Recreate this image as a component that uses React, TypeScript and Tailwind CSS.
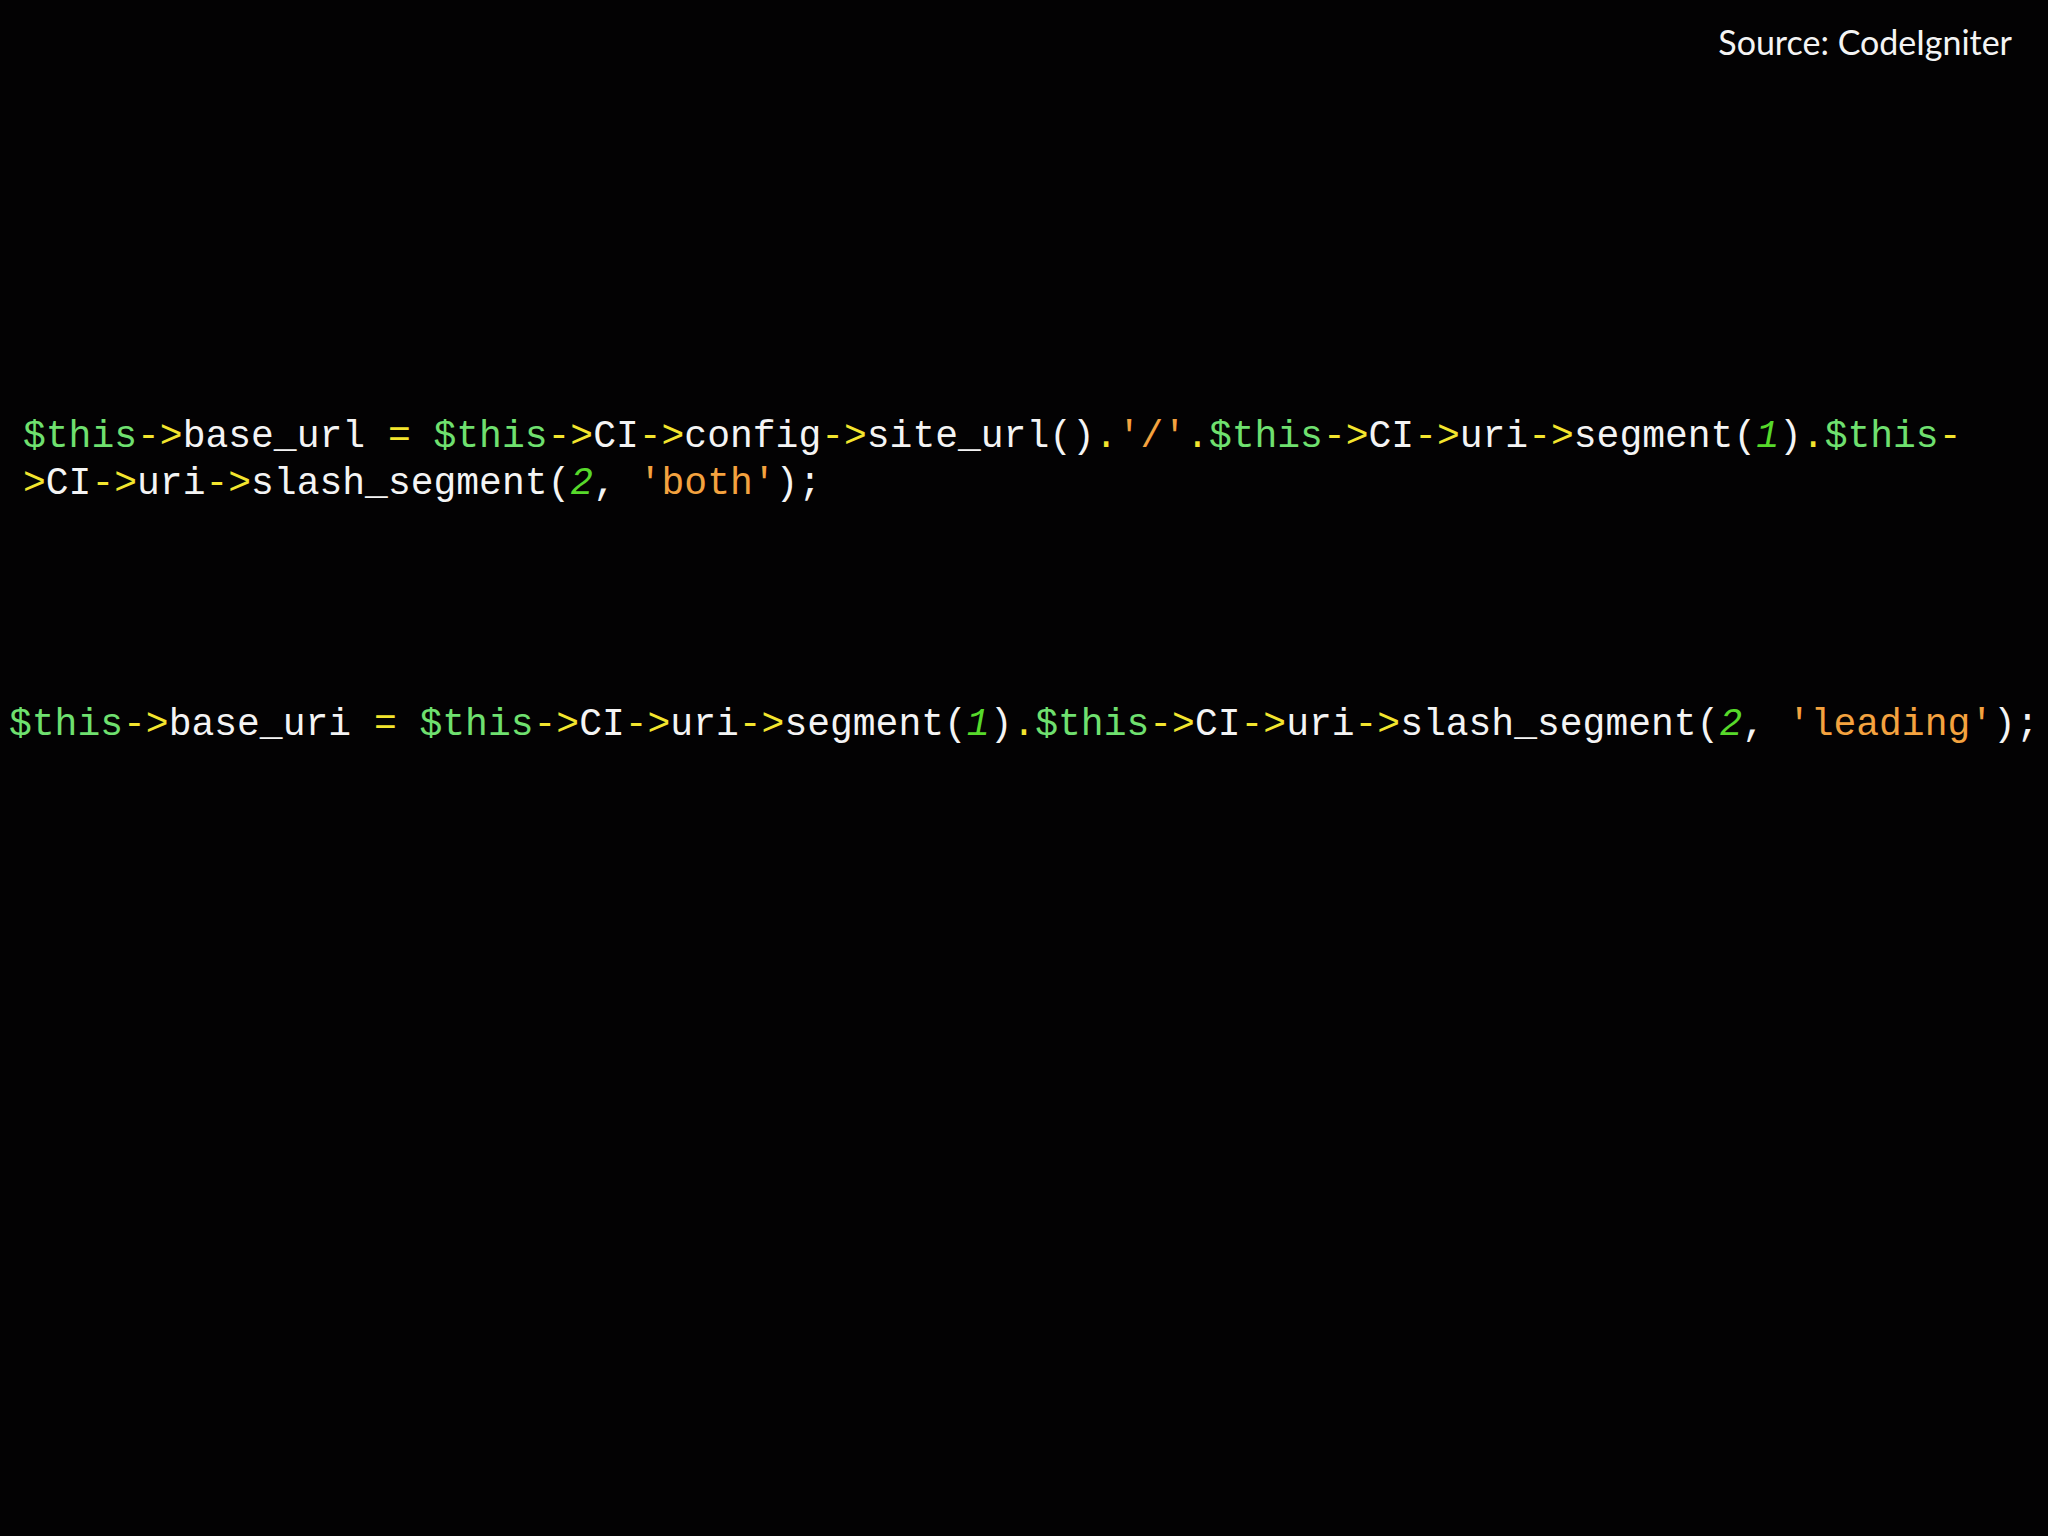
const G = ({ children }: { children: React.ReactNode }) => <span className="text-[#6fe06f]">{children}</span>;
const Y = ({ children }: { children: React.ReactNode }) => <span className="text-[#f3e52e]">{children}</span>;
const S = ({ children }: { children: React.ReactNode }) => <span className="text-[#f4a23f]">{children}</span>;
const N = ({ children }: { children: React.ReactNode }) => <span className="italic text-[#57d92b]">{children}</span>;

export default function App() {
  return (
    <div className="flex h-[1536px] w-[2048px] flex-col overflow-hidden bg-[#030203] text-[#f4f4f4]">
      <div className="flex justify-end pt-[22px] pr-[36px]">
        <span className="font-['Lato',sans-serif] text-[34px] leading-[40px]">Source: CodeIgniter</span>
      </div>

      <div className="mt-[351px] pl-[23px] font-['Liberation_Mono',monospace] text-[38px] leading-[47px] whitespace-pre">
        <div>
          <G>$this</G><Y>-&gt;</Y>base_url <Y>=</Y> <G>$this</G><Y>-&gt;</Y>CI<Y>-&gt;</Y>config<Y>-&gt;</Y>site_url()<Y>.</Y><S>'/'</S><Y>.</Y><G>$this</G><Y>-&gt;</Y>CI<Y>-&gt;</Y>uri<Y>-&gt;</Y>segment(<N>1</N>)<Y>.</Y><G>$this</G><Y>-</Y>
        </div>
        <div>
          <Y>&gt;</Y>CI<Y>-&gt;</Y>uri<Y>-&gt;</Y>slash_segment(<N>2</N>, <S>'both'</S>);
        </div>
      </div>

      <div className="mt-[194px] pl-[9px] font-['Liberation_Mono',monospace] text-[38px] leading-[47px] whitespace-pre">
        <G>$this</G><Y>-&gt;</Y>base_uri <Y>=</Y> <G>$this</G><Y>-&gt;</Y>CI<Y>-&gt;</Y>uri<Y>-&gt;</Y>segment(<N>1</N>)<Y>.</Y><G>$this</G><Y>-&gt;</Y>CI<Y>-&gt;</Y>uri<Y>-&gt;</Y>slash_segment(<N>2</N>, <S>'leading'</S>);
      </div>
    </div>
  );
}
